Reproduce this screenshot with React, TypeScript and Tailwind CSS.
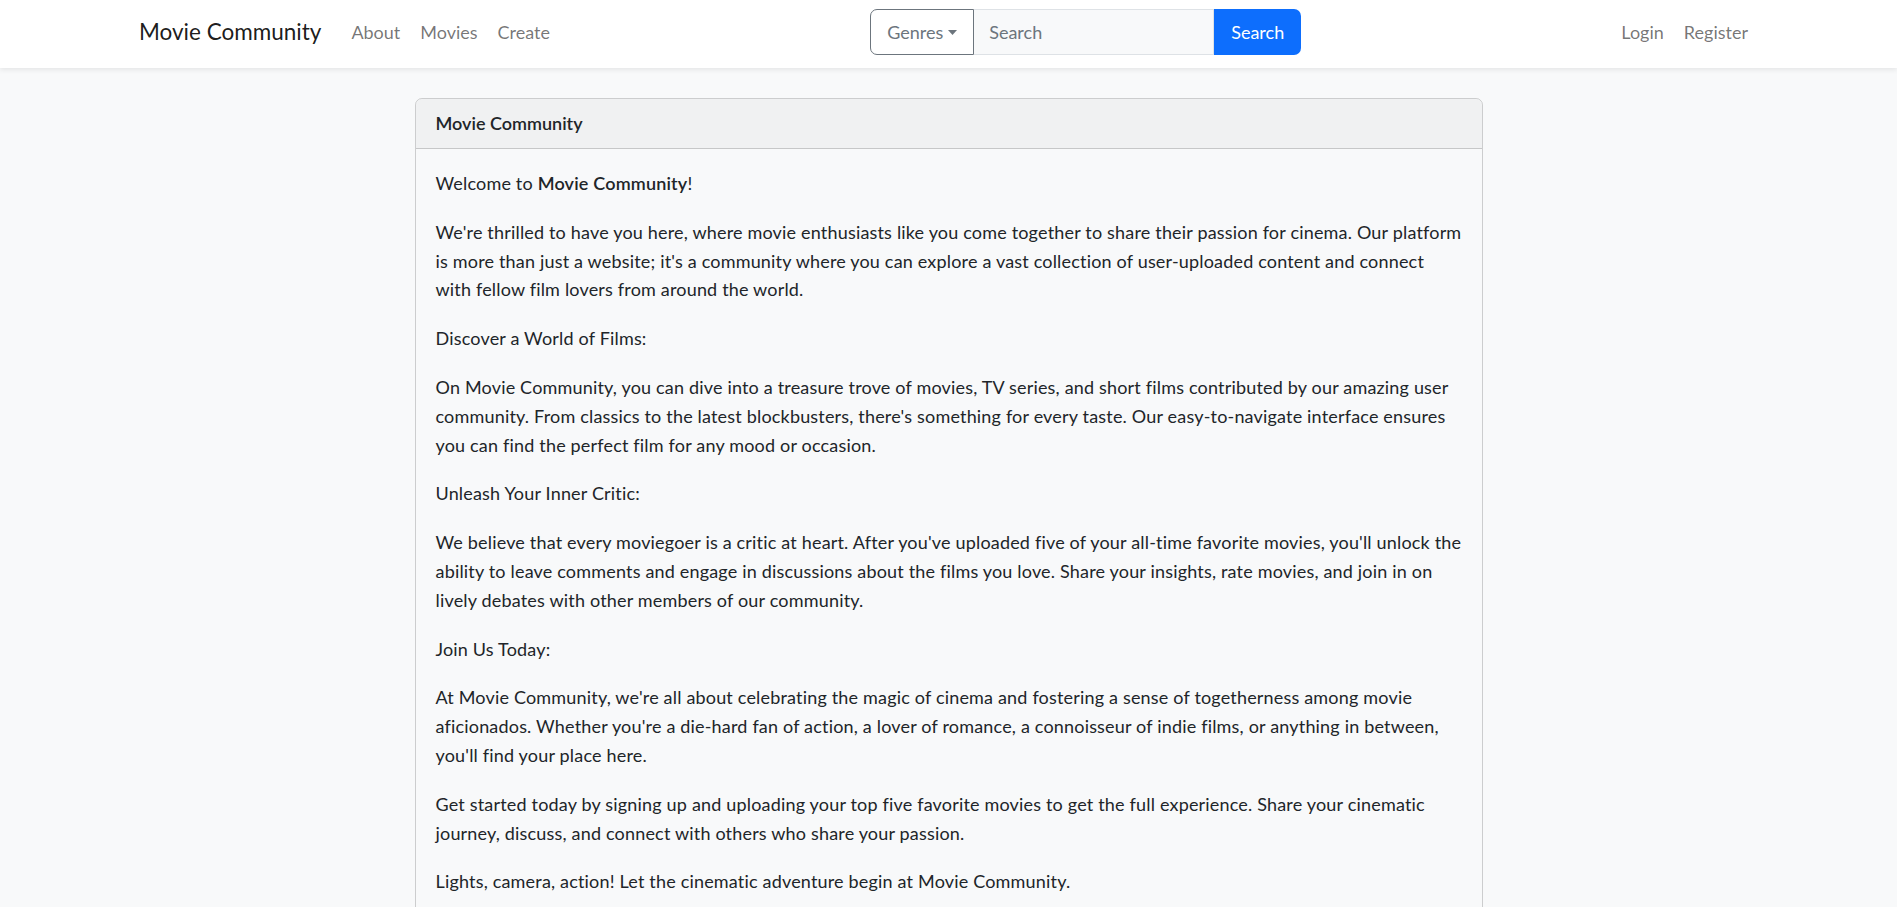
import React from "react";

const font = { fontFamily: "Lato, 'Noto Sans', sans-serif" };

export default function App() {
  return (
    <div className="min-h-[907px] bg-[#f8f9fa] text-[#212529] text-[18px] leading-[28.8px]" style={font}>
      <nav className="h-[68px] bg-white shadow-[0_2px_5px_rgba(0,0,0,0.08)] relative z-10">
        <div className="mx-auto w-[1619px] h-[64px] flex items-center">
          <a className="text-[22.5px] text-black/90 mr-[20px] whitespace-nowrap">Movie Community</a>
          <ul className="flex">
            <li className="px-[10px] text-black/55">About</li>
            <li className="px-[10px] text-black/55">Movies</li>
            <li className="px-[10px] text-black/55">Create</li>
          </ul>
          <form className="mx-auto flex h-[46px]">
            <button type="button" className="w-[104px] h-full border border-[#6c757d] rounded-l-[7px] text-[#6c757d] flex items-center justify-center gap-[5px]">
              Genres
              <svg width="9" height="5" viewBox="0 0 9 5"><path d="M0 0h9L4.5 5z" fill="#6c757d" /></svg>
            </button>
            <input placeholder="Search" className="w-[240px] h-full border border-[#dee2e6] border-l-0 bg-[#f8f9fa] px-[15px] placeholder:text-[#6c757d] outline-none" />
            <button type="button" className="w-[87px] h-full bg-[#0d6efd] text-white rounded-r-[7px]">Search</button>
          </form>
          <ul className="flex">
            <li className="px-[10px] text-black/55">Login</li>
            <li className="px-[10px] text-black/55">Register</li>
          </ul>
        </div>
      </nav>
      <main className="pt-[30px]">
        <div className="mx-auto w-[1068px] border border-black/[0.175] rounded-[7px]">
          <div className="h-[50px] px-[20px] flex items-center bg-black/[0.03] border-b border-black/[0.175] font-semibold rounded-t-[7px]">
            Movie Community
          </div>
          <div className="p-[20px] tracking-[0.18px] [&>p]:mb-[20px]">
            <p>Welcome to <strong className="font-semibold">Movie Community</strong>!</p>
            <p>We're thrilled to have you here, where movie enthusiasts like you come together to share their passion for cinema. Our platform is more than just a website; it's a community where you can explore a vast collection of user-uploaded content and connect with fellow film lovers from around the world.</p>
            <p>Discover a World of Films:</p>
            <p>On Movie Community, you can dive into a treasure trove of movies, TV series, and short films contributed by our amazing user community. From classics to the latest blockbusters, there's something for every taste. Our easy-to-navigate interface ensures you can find the perfect film for any mood or occasion.</p>
            <p>Unleash Your Inner Critic:</p>
            <p>We believe that every moviegoer is a critic at heart. After you've uploaded five of your all-time favorite movies, you'll unlock the ability to leave comments and engage in discussions about the films you love. Share your insights, rate movies, and join in on lively debates with other members of our community.</p>
            <p>Join Us Today:</p>
            <p>At Movie Community, we're all about celebrating the magic of cinema and fostering a sense of togetherness among movie aficionados. Whether you're a die-hard fan of action, a lover of romance, a connoisseur of indie films, or anything in between, you'll find your place here.</p>
            <p>Get started today by signing up and uploading your top five favorite movies to get the full experience. Share your cinematic journey, discuss, and connect with others who share your passion.</p>
            <p>Lights, camera, action! Let the cinematic adventure begin at Movie Community.</p>
          </div>
        </div>
      </main>
    </div>
  );
}
